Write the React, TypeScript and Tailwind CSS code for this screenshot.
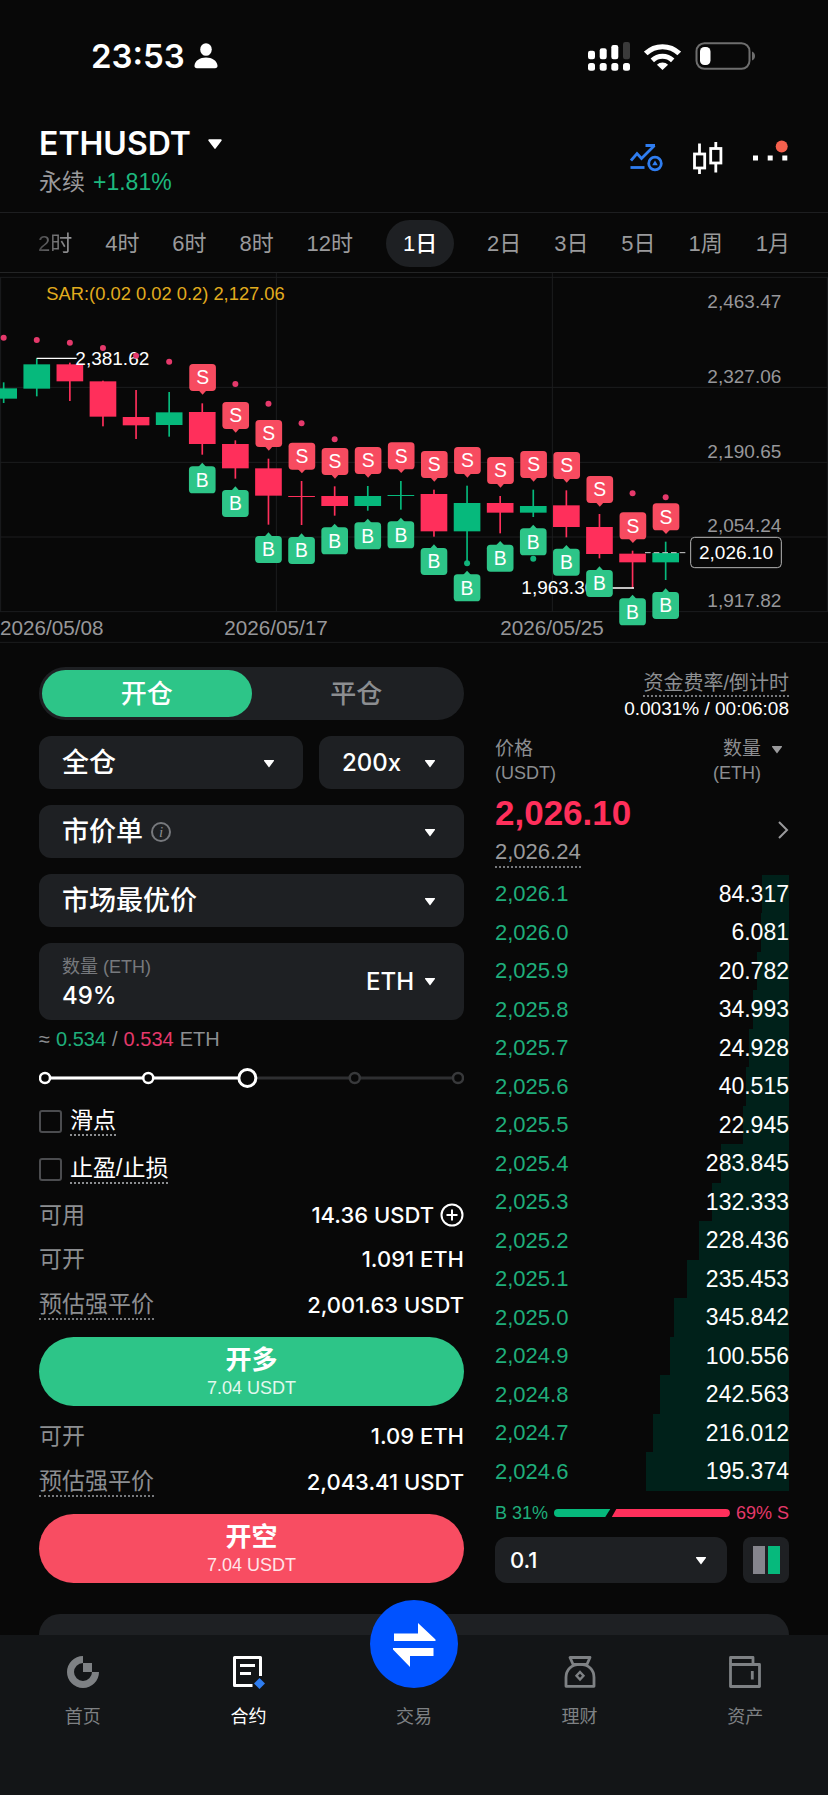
import { useState, type ReactNode } from "react";

const intervals = ["2时", "4时", "6时", "8时", "12时", "1日", "2日", "3日", "5日", "1周", "1月"];

type Candle = {
  up: boolean;
  high: number;
  top: number;
  bottom: number;
  low: number;
  sell?: number;
  buy?: number;
  sar?: number;
};

// Chart units are a third of a pixel on the base width
const candles: Candle[] = [
  { up: true, high: 337, top: 355, bottom: 386, low: 399, sar: 203 },
  { up: true, high: 265, top: 283, bottom: 356, low: 379, sar: 210 },
  { up: false, high: 278, top: 283, bottom: 334, low: 393, sar: 218 },
  { up: false, high: 332, top: 334, bottom: 440, low: 469, sar: 234 },
  { up: false, high: 360, top: 441, bottom: 466, low: 507, sar: 257 },
  { up: true, high: 366, top: 427, bottom: 465, low: 500, sar: 275 },
  { up: false, high: 400, top: 426, bottom: 522, low: 554, sell: 282, buy: 589 },
  { up: false, high: 511, top: 522, bottom: 595, low: 626, sell: 396, buy: 660, sar: 342 },
  { up: false, high: 566, top: 595, bottom: 677, low: 764, sell: 450, buy: 798, sar: 401 },
  { up: false, high: 633, top: 678, bottom: 681, low: 765, sell: 518, buy: 801, sar: 460 },
  { up: false, high: 649, top: 678, bottom: 708, low: 737, sell: 534, buy: 772, sar: 508 },
  { up: true, high: 648, top: 678, bottom: 708, low: 722, sell: 531, buy: 757 },
  { up: true, high: 633, top: 675, bottom: 678, low: 719, sell: 517, buy: 754 },
  { up: false, high: 659, top: 672, bottom: 784, low: 800, sell: 543, buy: 834 },
  { up: true, high: 647, top: 699, bottom: 784, low: 880, sell: 531, buy: 913, sar: 880 },
  { up: false, high: 678, top: 699, bottom: 728, low: 790, sell: 561, buy: 824 },
  { up: true, high: 659, top: 708, bottom: 728, low: 741, sell: 543, buy: 775, sar: 866 },
  { up: false, high: 661, top: 706, bottom: 771, low: 802, sell: 546, buy: 836 },
  { up: false, high: 732, top: 771, bottom: 852, low: 865, sell: 618, buy: 900 },
  { up: false, high: 842, top: 851, bottom: 877, low: 955, sell: 727, buy: 985, sar: 670 },
  { up: true, high: 815, top: 849, bottom: 877, low: 930, sell: 700, buy: 966, sar: 682 },
];

const priceLabels = [
  { y: 115, text: "2,463.47" },
  { y: 339, text: "2,327.06" },
  { y: 564, text: "2,190.65" },
  { y: 787, text: "2,054.24" },
  { y: 1012, text: "1,917.82" },
];

const bids = [
  { price: "2,026.1", size: "84.317", depth: 9.2 },
  { price: "2,026.0", size: "6.081", depth: 9.6 },
  { price: "2,025.9", size: "20.782", depth: 10.8 },
  { price: "2,025.8", size: "34.993", depth: 12.2 },
  { price: "2,025.7", size: "24.928", depth: 13.6 },
  { price: "2,025.6", size: "40.515", depth: 14.8 },
  { price: "2,025.5", size: "22.945", depth: 15.8 },
  { price: "2,025.4", size: "283.845", depth: 23.2 },
  { price: "2,025.3", size: "132.333", depth: 26.2 },
  { price: "2,025.2", size: "228.436", depth: 30.6 },
  { price: "2,025.1", size: "235.453", depth: 34.6 },
  { price: "2,025.0", size: "345.842", depth: 39.2 },
  { price: "2,024.9", size: "100.556", depth: 40.5 },
  { price: "2,024.8", size: "242.563", depth: 43.8 },
  { price: "2,024.7", size: "216.012", depth: 46.2 },
  { price: "2,024.6", size: "195.374", depth: 48.6 },
];

function Caret({ className = "h-[9px] w-3" }: { className?: string }) {
  return (
    <svg viewBox="0 0 12 9" className={`shrink-0 ${className}`} fill="currentColor" aria-hidden="true">
      <path d="M1.6 1h8.8a.6.6 0 0 1 .5 1L6.6 7.700a.7.7 0 0 1-1.200 0L1.100 2a.6.6 0 0 1 .5-1z" />
    </svg>
  );
}

function StatusBar() {
  return (
    <div className="flex h-28 items-center justify-between pr-[72px] pl-[91px]">
      <div className="flex items-center gap-[9px]">
        <span className="font-['Inter',sans-serif] text-[33px] leading-10 font-semibold">23:53</span>
        <svg viewBox="0 0 24 26" className="h-[26px] w-6" fill="currentColor" aria-hidden="true">
          <ellipse cx="12" cy="6.500" rx="5.800" ry="6.300" />
          <path d="M0.500 22.500C1 17.500 6 14.500 12 14.500s11 3 11.500 8c.2 1.800-.8 2.700-2.500 2.700H3c-1.700 0-2.700-.9-2.500-2.700z" />
        </svg>
      </div>
      <div className="flex items-center gap-3.5">
        <svg viewBox="0 0 42 29" className="h-[29px] w-[42px]" fill="currentColor" aria-hidden="true">
          <rect x="0" y="8.700" width="7" height="8.500" rx="2.200" />
          <rect x="11.700" y="6.200" width="7" height="11" rx="2.200" />
          <rect x="23.300" y="3" width="7" height="14.200" rx="2.200" />
          <rect x="35" y="0" width="7" height="17.200" rx="2.200" className="text-[#3a3a3a]" />
          <rect x="0" y="21" width="7" height="7.700" rx="2.500" />
          <rect x="11.700" y="21" width="7" height="7.700" rx="2.500" />
          <rect x="23.300" y="21" width="7" height="7.700" rx="2.500" />
          <rect x="35" y="21" width="7" height="7.700" rx="2.500" />
        </svg>
        <svg viewBox="0 0 37 27" className="h-[27px] w-[37px]" fill="none" stroke="currentColor" aria-hidden="true">
          <path d="M1.800 10.500A24 24 0 0 1 35.200 10.500" strokeWidth="5.200" />
          <path d="M8.300 17.300A15 15 0 0 1 28.700 17.300" strokeWidth="5" />
          <path d="M18.500 27l-5.600-5.200a8 8 0 0 1 11.200 0z" fill="currentColor" stroke="none" />
        </svg>
        <svg viewBox="0 0 61 28" className="h-7 w-[61px]" aria-hidden="true">
          <rect x="1.500" y="1.200" width="53" height="25.600" rx="8" fill="none" stroke="#6e6e6e" strokeWidth="2" />
          <rect x="5" y="5" width="10.500" height="18" rx="4.500" fill="#fff" />
          <path d="M57 9.500c4 1.500 4 7.500 0 9z" fill="#6e6e6e" />
        </svg>
      </div>
    </div>
  );
}

function Header() {
  return (
    <header className="flex h-[101px] items-center justify-between border-b border-[#1d1e20] px-[39px]">
      <div>
        <button className="flex h-10 items-center gap-4 font-['Inter',sans-serif] text-[32px] font-semibold">
          ETHUSDT
          <Caret className="h-3 w-4" />
        </button>
        <div className="flex h-9 items-center gap-2 text-[23px] text-[#9a9a9c]">
          永续 <span className="text-[#1db87e]">+1.81%</span>
        </div>
      </div>
      <div className="flex items-center gap-[30px] pb-2">
        <button aria-label="指标">
          <svg viewBox="0 0 33 28" className="h-7 w-[33px]" fill="none" stroke="#2f7df0" strokeWidth="2.800" aria-hidden="true">
            <path d="M1 16.500L7 9.500l4.500 5L24.500 1.500M15.500 1.500h9.500" />
            <path d="M.5 23.500h14" />
            <circle cx="25" cy="19.500" r="6.300" />
            <path d="M25 16.500l2.800 4.800h-5.600z" fill="#2f7df0" stroke="none" />
          </svg>
        </button>
        <button aria-label="K线">
          <svg viewBox="0 0 30 32" className="h-8 w-[30px]" fill="none" stroke="currentColor" strokeWidth="2.800" aria-hidden="true">
            <path d="M6.500 1.500V12M6.500 26v6M22.800 0v6.500M22.800 21v9.500" />
            <rect x="1.500" y="12" width="10.200" height="14" />
            <rect x="17.700" y="6.500" width="10.200" height="14.500" />
          </svg>
        </button>
        <button aria-label="更多">
          <svg viewBox="0 0 36 34" className="h-[34px] w-9 overflow-visible" fill="currentColor" aria-hidden="true">
            <path d="M0 14.500h5v5H0zM14.700 14.500h5v5h-5zM29.300 14.500h5v5h-5z" />
            <circle cx="28.700" cy="5.500" r="6" fill="#f5604d" />
          </svg>
        </button>
      </div>
    </header>
  );
}

function IntervalTabs({ value, onChange }: { value: string; onChange: (v: string) => void }) {
  return (
    <nav className="flex h-[60px] items-center justify-between border-b border-[#232425] px-[38px] pt-px text-[22px] text-[#9a9a9c]">
      {intervals.map((item, i) => (
        <button
          key={item}
          onClick={() => onChange(item)}
          className={
            item === value
              ? "h-[47px] rounded-full bg-[#1e2023] px-[17px] font-medium text-white"
              : i === 0
                ? "bg-gradient-to-r from-[#4a4a4c] to-[#9a9a9c] bg-clip-text text-transparent"
                : ""
          }
        >
          {item}
        </button>
      ))}
    </nav>
  );
}

function Flag({ x, y, side }: { x: number; y: number; side: "S" | "B" }) {
  const sell = side === "S";
  return (
    <g fill={sell ? "#f74b60" : "#2dc588"}>
      <rect x={x - 40} y={y} width="80" height="81" rx="11" />
      {sell ? (
        <path d={`M${x - 12} ${y + 79}h24l-12 13z`} />
      ) : (
        <path d={`M${x - 12} ${y + 2}h24l-12 -13z`} />
      )}
      <text x={x} y={y + 61} textAnchor="middle" fontSize="58" fill="#fff">
        {side}
      </text>
    </g>
  );
}

function Chart() {
  const xOf = (i: number) => 11 + i * 99.3;
  return (
    <svg viewBox="0 9 2484 1110" className="block w-full" role="img" aria-label="ETHUSDT 日线">
      <g stroke="#1c1d1f" strokeWidth="3">
        <path d="M0 22H2484M0 352H2484M0 577H2484M0 801H2484M0 1025H2484M0 1117H2484" />
        <path d="M2 22V1025M829 9V1025M1657 9V1025M2482 22V1025" />
      </g>

      <g fontSize="57" fill="#97979a">
        {priceLabels.map((p) => (
          <text key={p.text} x="2344" y={p.y} textAnchor="end">
            {p.text}
          </text>
        ))}
        <text x="0" y="1095" fontSize="62">2026/05/08</text>
        <text x="828" y="1095" fontSize="62" textAnchor="middle">2026/05/17</text>
        <text x="1656" y="1095" fontSize="62" textAnchor="middle">2026/05/25</text>
      </g>
      <text x="139" y="90" fontSize="55" fill="#e2ac1e">SAR:(0.02 0.02 0.2) 2,127.06</text>

      {candles.map((c, i) => (
        <g key={i} fill={c.up ? "#06b97c" : "#ff2f5b"}>
          <rect x={xOf(i) - 2.5} y={c.high} width="5" height={c.low - c.high} />
          <rect x={xOf(i) - 40} y={c.top} width="80" height={c.bottom - c.top} />
        </g>
      ))}

      <path d="M110 265H230M1780 954H1902" stroke="#fff" strokeWidth="4" />
      <g fontSize="57" fill="#fff">
        <text x="226" y="286">2,381.62</text>
        <text x="1564" y="973">1,963.30</text>
      </g>
      <path d="M1935 848H2060" stroke="#d0d0d0" strokeWidth="3" strokeDasharray="17 9" />

      {candles.map((c, i) => (
        <g key={i}>
          {c.sar && <circle cx={xOf(i)} cy={c.sar} r="9" fill={c.sar > c.bottom ? "#12b47c" : "#e5396b"} />}
          {c.sell && <Flag x={xOf(i) + 1} y={c.sell} side="S" />}
          {c.buy && <Flag x={xOf(i)} y={c.buy} side="B" />}
        </g>
      ))}

      <rect x="2072" y="802" width="272" height="91" rx="12" fill="#080808" stroke="#b5b5b5" strokeWidth="3" />
      <text x="2208" y="868" fontSize="57" textAnchor="middle" fill="#fff">2,026.10</text>
    </svg>
  );
}

function Picker({ label, options, info, latin }: { label: string; options: string[]; info?: boolean; latin?: boolean }) {
  return (
    <label className="flex h-[53px] min-w-0 items-center rounded-xl bg-[#1e2023] pt-px pr-7 pl-[23px] text-white">
      <select
        aria-label={label}
        className={`appearance-none bg-transparent font-['Inter','Noto_Sans_CJK_SC',sans-serif] leading-9 font-medium outline-none [field-sizing:content] ${
          latin ? "text-[24px]" : "text-[27px]"
        }`}
      >
        {options.map((o) => (
          <option key={o}>{o}</option>
        ))}
      </select>
      {info && (
        <span className="ml-2 flex size-5 items-center justify-center rounded-full border-2 border-[#77797d] font-['Liberation_Serif',serif] text-[15px] leading-none text-[#8b8d91] italic">
          i
        </span>
      )}
      <Caret className="ml-auto h-[9px] w-3" />
    </label>
  );
}

function Row({ label, dotted, tall, children }: { label: string; dotted?: boolean; tall?: boolean; children: ReactNode }) {
  return (
    <div className={`flex items-center justify-between ${tall ? "h-12" : "h-11"}`}>
      <dt className={`text-[23px] leading-7 text-[#8c8e91] ${dotted ? "border-b-2 border-dotted border-[#77797d]" : ""}`}>
        {label}
      </dt>
      <dd className="flex items-center gap-1.5 font-['Inter',sans-serif] text-[22px] font-medium">{children}</dd>
    </div>
  );
}

function Check({ label }: { label: string }) {
  return (
    <label className="flex h-12 items-center gap-2 text-[23px]">
      <input
        type="checkbox"
        className="size-[23px] appearance-none rounded-[3px] border-2 border-[#4b4c4f] checked:bg-[#2dc588]"
      />
      <span className="border-b-2 border-dotted border-[#8c8e91] leading-7">{label}</span>
    </label>
  );
}

const stops = [0, 25, 75, 100];

function AmountSlider() {
  const [value, setValue] = useState(49);
  const at = (v: number) => 6 + v * 4.13;
  return (
    <div className="relative flex h-[39px] items-center">
      <svg viewBox="0 0 425 20" className="block w-full" fill="#080808" strokeWidth="2.500" aria-hidden="true">
        <path d="M6 10H418" stroke="#2e2f31" strokeWidth="3" />
        <path d={`M6 10H${at(value)}`} stroke="#fff" strokeWidth="3" />
        {stops.map((s) => (
          <circle key={s} cx={at(s)} cy="10" r="5" stroke={s <= value ? "#fff" : "#38393b"} />
        ))}
        <circle cx={at(value)} cy="10" r="8.500" stroke="#fff" strokeWidth="3" />
      </svg>
      <input
        type="range"
        aria-label="数量比例"
        value={value}
        onChange={(e) => setValue(Number(e.target.value))}
        className="absolute inset-0 w-full opacity-0"
      />
    </div>
  );
}

function OrderForm() {
  return (
    <form className="min-w-0">
      <div className="flex flex-col gap-4">
        <div className="grid h-[53px] grid-cols-2 rounded-full bg-[#1e2023] p-[3px] text-[26px] font-medium">
          <button type="button" className="rounded-full bg-[#2dc588] pt-px text-white">
            开仓
          </button>
          <button type="button" className="rounded-full pt-px text-[#8c8e91]">
            平仓
          </button>
        </div>
        <div className="grid grid-cols-[264fr_145fr] gap-4">
          <Picker label="保证金模式" options={["全仓", "逐仓"]} />
          <Picker label="杠杆" options={["200x", "100x"]} latin />
        </div>
        <Picker label="订单类型" options={["市价单", "限价单"]} info />
        <Picker label="价格类型" options={["市场最优价"]} />
        <div className="flex h-[77px] items-center justify-between rounded-xl bg-[#1e2023] pr-7 pl-[23px]">
          <div className="flex min-w-0 flex-col">
            <label htmlFor="amount" className="text-[18px] leading-7 text-[#77797d]">
              数量 (ETH)
            </label>
            <input
              id="amount"
              defaultValue="49%"
              className="w-full bg-transparent font-['Inter',sans-serif] text-[24px] leading-[30px] font-medium outline-none"
            />
          </div>
          <label className="flex shrink-0 items-center gap-2.5">
            <select
              aria-label="单位"
              className="appearance-none bg-transparent font-['Inter',sans-serif] text-[24px] font-medium outline-none [field-sizing:content]"
            >
              <option>ETH</option>
              <option>USDT</option>
            </select>
            <Caret />
          </label>
        </div>
      </div>

      <p className="flex h-[38px] items-center gap-1.5 text-[20px] text-[#8c8e91]">
        <span>≈</span>
        <span className="text-[#1fae7b]">0.534</span> / <span className="text-[#e5396b]">0.534</span> ETH
      </p>
      <AmountSlider />
      <Check label="滑点" />
      <Check label="止盈/止损" />

      <dl>
        <Row label="可用">
          14.36 USDT
          <svg viewBox="0 0 24 24" className="size-6" fill="none" stroke="currentColor" strokeWidth="2" aria-hidden="true">
            <circle cx="12" cy="12" r="10.500" />
            <path d="M12 6.500v11M6.500 12h11" />
          </svg>
        </Row>
        <Row label="可开">1.091 ETH</Row>
        <Row label="预估强平价" dotted tall>
          2,001.63 USDT
        </Row>
      </dl>
      <button type="button" className="my-2 flex h-[69px] w-full flex-col items-center justify-center rounded-full bg-[#2dc588]">
        <span className="text-[26px] leading-8 font-bold">开多</span>
        <span className="text-[18px] leading-6 text-[#e2f8ee]">7.04 USDT</span>
      </button>
      <dl>
        <Row label="可开">1.09 ETH</Row>
        <Row label="预估强平价" dotted tall>
          2,043.41 USDT
        </Row>
      </dl>
      <button type="button" className="mt-2 flex h-[69px] w-full flex-col items-center justify-center rounded-full bg-[#f84d62]">
        <span className="text-[26px] leading-8 font-bold">开空</span>
        <span className="text-[18px] leading-6 text-[#ffe5e8]">7.04 USDT</span>
      </button>
    </form>
  );
}

function OrderBook() {
  return (
    <section className="min-w-0">
      <div className="flex flex-col items-end pt-1">
        <span className="border-b-2 border-dotted border-[#77797d] text-[20px] leading-6 text-[#8c8e91]">
          资金费率/倒计时
        </span>
        <span className="text-[19px] leading-6">0.0031% / 00:06:08</span>
      </div>

      <table className="mt-4 w-full">
        <thead>
          <tr className="text-[19px] leading-6 text-[#8c8e91]">
            <th scope="col" className="text-left font-normal">
              <span className="block">价格</span>
              <span className="block text-[18px]">(USDT)</span>
            </th>
            <th scope="col" className="font-normal">
              <span className="flex justify-end gap-2.5 pr-1.5">
                <span className="text-right">
                  <span className="block">数量</span>
                  <span className="block text-[18px]">(ETH)</span>
                </span>
                <Caret className="mt-2 h-[9px] w-3 text-[#9a9a9c]" />
              </span>
            </th>
          </tr>
          <tr>
            <td colSpan={2} className="pt-[7px] pb-[7px]">
              <div className="flex items-center justify-between">
                <div>
                  <div className="text-[35px] leading-[42px] font-bold text-[#ff2f5b]">2,026.10</div>
                  <span className="mt-1 inline-block border-b-2 border-dotted border-[#77797d] text-[22px] leading-7 text-[#9a9a9c]">
                    2,026.24
                  </span>
                </div>
                <svg viewBox="0 0 12 18" className="h-[18px] w-3" fill="none" stroke="#9a9a9c" strokeWidth="2" aria-hidden="true">
                  <path d="M2 1l8 8-8 8" />
                </svg>
              </div>
            </td>
          </tr>
        </thead>
        <tbody className="leading-[38px]">
          {bids.map((b) => (
            <tr
              key={b.price}
              className="even:leading-[39px]"
              style={{ backgroundImage: `linear-gradient(to left, #00211a ${b.depth}%, transparent ${b.depth}%)` }}
            >
              <td className="text-[22px] text-[#1fae7b]">{b.price}</td>
              <td className="text-right text-[23px]">{b.size}</td>
            </tr>
          ))}
        </tbody>
      </table>

      <div className="flex h-11 items-center gap-1.5 text-[18px] whitespace-nowrap">
        <span className="text-[#1fae7b]">B 31%</span>
        <svg viewBox="0 0 175 8" className="h-2 min-w-0 flex-1" preserveAspectRatio="none" aria-hidden="true">
          <path d="M4 0H56L51 8H4A4 4 0 0 1 4 0z" fill="#06b97c" />
          <path d="M62 0H171A4 4 0 0 1 171 8H57.500z" fill="#ff2f5b" />
        </svg>
        <span className="text-[#e5396b]">69% S</span>
      </div>

      <div className="mt-0.5 flex gap-4">
        <label className="flex h-[46px] flex-1 items-center rounded-xl bg-[#1e2023] pr-5 pl-[15px]">
          <select
            aria-label="深度精度"
            className="flex-1 appearance-none bg-transparent font-['Inter',sans-serif] text-[22px] font-medium outline-none"
          >
            <option>0.1</option>
            <option>1</option>
          </select>
          <Caret />
        </label>
        <button aria-label="盘口布局" className="flex size-[46px] items-center justify-center gap-[3px] rounded-lg bg-[#1e2023]">
          <span className="h-7 w-3 bg-[#85858d]" />
          <span className="h-7 w-3 bg-[#06b97c]" />
        </button>
      </div>
    </section>
  );
}

function NavItem({ label, active, icon }: { label: string; active?: boolean; icon: ReactNode }) {
  return (
    <a href="#" className={`flex flex-col items-center gap-[15px] pt-[21px] ${active ? "text-white" : "text-[#7e8184]"}`}>
      {icon}
      <span className="text-[18px] leading-7">{label}</span>
    </a>
  );
}

function BottomNav() {
  return (
    <nav className="grid h-40 grid-cols-5 bg-[#131517]">
      <NavItem
        label="首页"
        icon={
          <svg viewBox="0 0 32 32" className="size-8" fill="currentColor" aria-hidden="true">
            <path d="M16 0A16 16 0 1 0 32 16H25A9 9 0 1 1 16 7z" />
            <path d="M16 7h9v9h-9z" />
          </svg>
        }
      />
      <NavItem
        label="合约"
        active
        icon={
          <svg viewBox="0 0 32 32" className="size-8 overflow-visible" fill="none" stroke="currentColor" strokeWidth="3" aria-hidden="true">
            <path d="M20.500 29.500H2.500V1.500H28.500V20" strokeLinejoin="round" />
            <path d="M8 9.500h15M8 17.500h11" />
            <path d="M27.500 22l5.500 5.500-5.500 5.500-5.500-5.500z" fill="#2f7df0" stroke="none" />
          </svg>
        }
      />
      <a href="#" className="relative flex flex-col items-center pt-[68px] text-[#7e8184]">
        <span className="absolute -top-[35px] flex size-[88px] rounded-full bg-[#0052ff] text-white">
          <svg viewBox="0 0 88 88" className="size-[88px]" fill="currentColor" aria-hidden="true">
            <path d="M24 33.500H48V23L65.500 39.500V41H24z" />
            <path d="M23 48H63.500V56H40V67L23 49.500z" />
          </svg>
        </span>
        <span className="text-[18px] leading-7">交易</span>
      </a>
      <NavItem
        label="理财"
        icon={
          <svg viewBox="0 0 32 32" className="size-8" fill="none" stroke="currentColor" strokeWidth="2.800" aria-hidden="true">
            <path d="M6 1.500H26L23 8.300H9z" strokeLinejoin="round" />
            <path d="M2 30.300V21.500C2 13.500 7.500 8.300 16 8.300S30 13.500 30 21.500V30.300z" strokeLinejoin="round" />
            <path d="M16 16l3.500 3.800L16 23.600l-3.500-3.800z" strokeWidth="2.400" />
          </svg>
        }
      />
      <NavItem
        label="资产"
        icon={
          <svg viewBox="0 0 32 32" className="size-8" fill="none" stroke="currentColor" strokeWidth="2.800" strokeLinejoin="round" aria-hidden="true">
            <path d="M1.500 8.500V1.500H24V8.500" />
            <path d="M1.500 8.500h29v22h-29z" />
            <path d="M23.300 15v8.500" />
          </svg>
        }
      />
    </nav>
  );
}

export default function App() {
  const [interval, setInterval] = useState("1日");

  return (
    <div className="flex min-h-screen flex-col bg-[#080808] font-['Liberation_Sans','Noto_Sans_CJK_SC',sans-serif] text-white">
      <StatusBar />
      <Header />
      <IntervalTabs value={interval} onChange={setInterval} />
      <Chart />
      <main className="grid grid-cols-[425fr_294fr] gap-[31px] px-[39px] pt-6">
        <OrderForm />
        <OrderBook />
      </main>
      {/* Positions sheet peeking out above the nav */}
      <div className="mx-[39px] mt-[31px] h-[21px] rounded-t-[21px] bg-[#1e2023]" />
      <BottomNav />
    </div>
  );
}
